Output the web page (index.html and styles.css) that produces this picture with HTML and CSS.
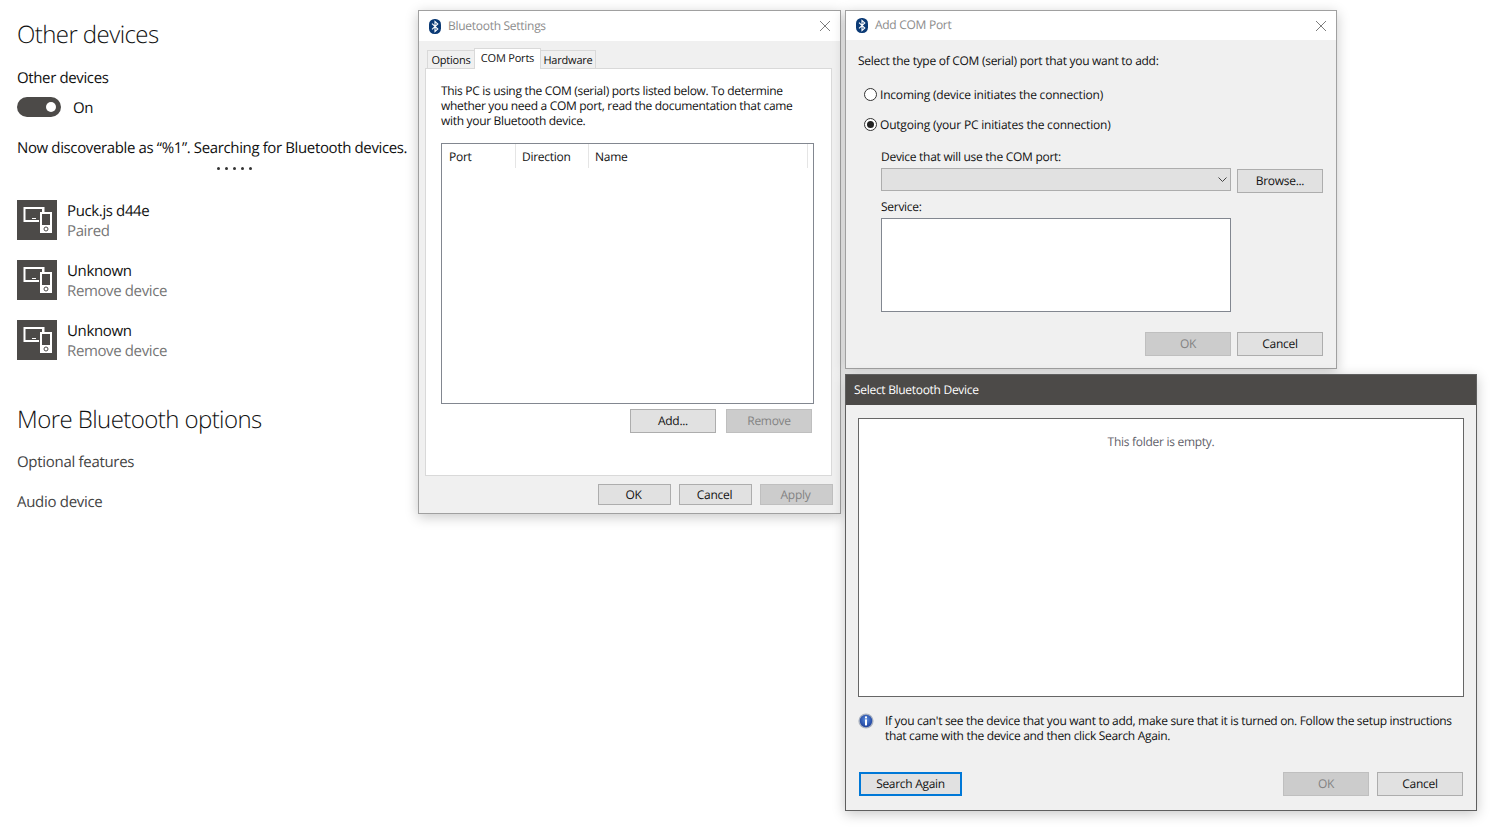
FILE: index.html
```html
<!DOCTYPE html>
<html lang="en">
<head>
<meta charset="utf-8">
<title>Bluetooth</title>
<link rel="stylesheet" href="styles.css">
</head>
<body>
<svg class="defs" width="0" height="0" aria-hidden="true">
  <defs>
    <symbol id="bt" viewBox="0 0 12 15">
      <rect x="0" y="0" width="12" height="15" rx="5.5" fill="#0b3a75"/>
      <path d="M3 4.6 8.8 10 6 12.6V2.4L8.8 5 3 10.4" fill="none" stroke="#fff" stroke-width="1.1"/>
    </symbol>
    <symbol id="close" viewBox="0 0 10 10">
      <path d="M0 0l10 10M10 0L0 10" fill="none" stroke="#7d7d7d" stroke-width="1"/>
    </symbol>
    <symbol id="device" viewBox="0 0 40 40">
      <rect width="40" height="40" fill="#4c4a48"/>
      <path d="M6.5 7H27.5V12H25V9H8.5V20H22V22H6.5Z" fill="#fff"/>
      <rect x="15" y="18" width="4" height="1" fill="#fff"/>
      <rect x="23" y="12" width="12" height="21" fill="#fff"/>
      <rect x="25" y="14" width="8" height="11" fill="#4c4a48"/>
      <circle cx="29" cy="29" r="2" fill="none" stroke="#4c4a48"/>
    </symbol>
  </defs>
</svg>

<main class="settings">
  <h1 class="heading">Other devices</h1>
  <p class="label label-first">Other devices</p>
  <div class="toggle-row">
    <span class="toggle"><span class="knob"></span></span>
    <span class="label toggle-label">On</span>
  </div>
  <p class="label status">Now discoverable as “%1”. Searching for Bluetooth devices.</p>
  <div class="dots"><i></i><i></i><i></i><i></i><i></i></div>
  <ul class="devices">
    <li class="device">
      <svg class="device-icon"><use href="#device"/></svg>
      <div class="device-text"><div class="label">Puck.js d44e</div><div class="label muted">Paired</div></div>
    </li>
    <li class="device">
      <svg class="device-icon"><use href="#device"/></svg>
      <div class="device-text"><div class="label">Unknown</div><div class="label muted">Remove device</div></div>
    </li>
    <li class="device">
      <svg class="device-icon"><use href="#device"/></svg>
      <div class="device-text"><div class="label">Unknown</div><div class="label muted">Remove device</div></div>
    </li>
  </ul>
  <h2 class="heading heading-more">More Bluetooth options</h2>
  <p class="label link link-first">Optional features</p>
  <p class="label link link-second">Audio device</p>
</main>

<section class="win win-settings">
  <header class="titlebar">
    <svg class="bt"><use href="#bt"/></svg>
    <span class="title">Bluetooth Settings</span>
    <svg class="close"><use href="#close"/></svg>
  </header>
  <div class="win-body settings-body">
    <div class="tabs">
      <span class="tab tab-options">Options</span>
      <span class="tab tab-active">COM Ports</span>
      <span class="tab tab-hardware">Hardware</span>
    </div>
    <div class="tab-page">
      <p class="text text-intro">This PC is using the COM (serial) ports listed below. To determine<br>whether you need a COM port, read the documentation that came<br>with your Bluetooth device.</p>
      <div class="port-list">
        <div class="list-head">
          <span class="col col-port">Port</span>
          <span class="col col-dir">Direction</span>
          <span class="col col-name">Name</span>
        </div>
      </div>
      <div class="list-actions">
        <button class="btn btn-wide">Add...</button>
        <button class="btn btn-wide" disabled>Remove</button>
      </div>
    </div>
    <div class="footer-small">
      <button class="btn btn-small">OK</button>
      <button class="btn btn-small">Cancel</button>
      <button class="btn btn-small" disabled>Apply</button>
    </div>
  </div>
</section>

<section class="win win-add">
  <header class="titlebar titlebar-add">
    <svg class="bt"><use href="#bt"/></svg>
    <span class="title">Add COM Port</span>
    <svg class="close"><use href="#close"/></svg>
  </header>
  <div class="win-body add-body">
    <p class="text">Select the type of COM (serial) port that you want to add:</p>
    <div class="radio radio-in"><span class="dot"></span><span class="text radio-text">Incoming (device initiates the connection)</span></div>
    <div class="radio radio-out"><span class="dot dot-on"></span><span class="text radio-text">Outgoing (your PC initiates the connection)</span></div>
    <div class="add-fields">
      <p class="text">Device that will use the COM port:</p>
      <div class="combo-row">
        <div class="combo">
          <svg class="chev" viewBox="0 0 9 5"><path d="M.5.5l4 4 4-4" fill="none" stroke="#444" stroke-width="1"/></svg>
        </div>
        <button class="btn btn-wide btn-browse">Browse...</button>
      </div>
      <p class="text service-label">Service:</p>
      <div class="service-box"></div>
    </div>
    <div class="footer-wide">
      <button class="btn btn-wide" disabled>OK</button>
      <button class="btn btn-wide">Cancel</button>
    </div>
  </div>
</section>

<section class="win win-select">
  <header class="titlebar-dark">Select Bluetooth Device</header>
  <div class="win-body select-body">
    <div class="device-box"><span class="text empty">This folder is empty.</span></div>
    <div class="hint">
      <svg class="info" viewBox="0 0 16 16">
        <defs><radialGradient id="infog" cx="50%" cy="40%" r="60%"><stop offset="0" stop-color="#5b8fe0"/><stop offset="1" stop-color="#1d3f9a"/></radialGradient></defs>
        <circle cx="8" cy="8" r="7.6" fill="#aab2c0"/>
        <circle cx="8" cy="8" r="6.2" fill="url(#infog)"/>
        <rect x="7" y="3.4" width="2" height="2" fill="#fff"/>
        <rect x="7" y="6.4" width="2" height="6" fill="#fff"/>
      </svg>
      <p class="text text-hint">If you can't see the device that you want to add, make sure that it is turned on. Follow the setup instructions<br>that came with the device and then click Search Again.</p>
    </div>
    <div class="select-footer">
      <button class="btn btn-search">Search Again</button>
      <span class="spacer"></span>
      <button class="btn btn-wide" disabled>OK</button>
      <button class="btn btn-wide">Cancel</button>
    </div>
  </div>
</section>
</body>
</html>
```

FILE: styles.css
```css
* { box-sizing: border-box; }
html, body { margin: 0; padding: 0; }
body {
  width: 1499px;
  height: 831px;
  overflow: hidden;
  background: #fff;
  color: #000;
  font-family: "Open Sans", "Noto Sans", sans-serif;
  text-rendering: geometricPrecision;
  position: relative;
}
p, h1, h2, ul { margin: 0; padding: 0; }
.defs { position: absolute; }

/* Settings page */
.settings { padding: 19px 0 0 17px; }
.heading {
  font-size: 24px;
  line-height: 32px;
  font-weight: 300;
  letter-spacing: -0.57px;
  color: #111;
}
.label {
  font-size: 15px;
  line-height: 20px;
  letter-spacing: -0.37px;
  color: #111;
  white-space: nowrap;
}
.label-first { margin-top: 17px; }
.toggle-row {
  display: flex;
  align-items: center;
  gap: 12px;
  margin-top: 9px;
  height: 20px;
}
.toggle {
  width: 44px;
  height: 20px;
  border-radius: 10px;
  background: #4c4a48;
  display: flex;
  align-items: center;
  justify-content: flex-end;
  padding-right: 5px;
}
.toggle-label { margin-top: 1px; }
.knob { width: 10px; height: 10px; border-radius: 50%; background: #fff; }
.status { margin-top: 21px; }
.dots { display: flex; gap: 5px; margin-top: 9px; padding-left: 200px; height: 3px; }
.dots i { width: 3px; height: 3px; border-radius: 50%; background: #333; display: block; }
.devices { list-style: none; margin-top: 30px; display: flex; flex-direction: column; gap: 20px; }
.device { display: flex; gap: 10px; height: 40px; align-items: flex-start; }
.device-icon { width: 40px; height: 40px; display: block; }
.device-text { padding-top: 1px; }
.muted { color: #767676; }
.heading-more { margin-top: 44px; }
.link { color: #444; letter-spacing: -0.3px; }
.link-first { margin-top: 16px; }
.link-second { margin-top: 20px; }

/* Windows */
.win {
  position: absolute;
  display: flex;
  flex-direction: column;
  background: #f0f0f0;
  border: 1px solid #a0a0a0;
  box-shadow: 0 3px 12px rgba(0, 0, 0, .22);
}
.win-settings { left: 418px; top: 10px; width: 423px; height: 504px; }
.win-add { left: 845px; top: 10px; width: 492px; height: 359px; }
.win-select { left: 845px; top: 374px; width: 632px; height: 437px; border-color: #5f5f5f; }

.titlebar {
  height: 30px;
  background: #fff;
  display: flex;
  align-items: center;
  padding: 0 10px;
  flex: none;
}
.titlebar-add { height: 29px; }
.bt { width: 12px; height: 15px; flex: none; margin-right: 7px; }
.title { font-size: 12px; letter-spacing: -0.28px; color: #8c8c8c; flex: 1; margin-top: -2px; }
.close { width: 10px; height: 10px; flex: none; }
.titlebar-dark {
  height: 30px;
  flex: none;
  background: #4c4a48;
  color: #fff;
  font-size: 12px;
  letter-spacing: -0.3px;
  display: flex;
  align-items: center;
  padding: 0 0 2px 8px;
}

.text {
  font-size: 12px;
  line-height: 15px;
  letter-spacing: -0.28px;
  color: #111;
  white-space: nowrap;
}
.text-intro { letter-spacing: -0.31px; }
.text-hint { letter-spacing: -0.315px; }
.radio-text { letter-spacing: -0.2px; }

.btn {
  font-family: inherit;
  text-rendering: geometricPrecision;
  font-size: 12px;
  letter-spacing: -0.3px;
  color: #111;
  background: #e1e1e1;
  border: 1px solid #adadad;
  padding: 0 0 2px;
  border-radius: 0;
  height: 24px;
  flex: none;
}
.btn:disabled { background: #ccc; border-color: #bfbfbf; color: #838383; }
.btn-wide { width: 86px; }
.btn-small { width: 73px; height: 21px; padding: 0 2px 0 0; }

/* Bluetooth Settings */
.settings-body { padding: 7px 8px 0 6px; flex: 1; display: flex; flex-direction: column; }
.tabs { display: flex; align-items: flex-end; height: 20px; padding-left: 2px; position: relative; z-index: 1; }
.tab {
  font-size: 11px;
  letter-spacing: -0.2px;
  height: 18px;
  line-height: 20px;
  background: #f0f0f0;
  border: 1px solid #d9d9d9;
  border-bottom: 0;
  text-align: center;
  color: #111;
}
.tab-options { width: 48px; margin-right: -1px; }
.tab-active { width: 67px; height: 21px; line-height: 20px; background: #fff; margin-bottom: -1px; position: relative; }
.tab-hardware { width: 56px; margin-left: -1px; }
.tab-page {
  height: 408px;
  background: #fff;
  border: 1px solid #d9d9d9;
  padding: 14px 0 0 15px;
}
.port-list { width: 373px; height: 261px; margin-top: 15px; border: 1px solid #828790; }
.list-head { display: flex; height: 24px; }
.col { font-size: 12px; letter-spacing: -0.28px; line-height: 26px; padding-left: 7px; color: #111; border-right: 1px solid #e5e5e5; }
.col-port { width: 74px; }
.col-dir { width: 73px; padding-left: 6px; }
.col-name { width: 219px; padding-left: 6px; }
.list-actions { display: flex; justify-content: flex-end; gap: 10px; width: 371px; margin-top: 5px; }
.footer-small { display: flex; gap: 8px; justify-content: flex-end; margin: 8px -1px 0 0; }

/* Add COM Port */
.add-body { padding: 13px 13px 0 12px; flex: 1; }
.radio { display: flex; align-items: center; gap: 3px; padding-left: 6px; height: 15px; }
.radio-in { margin-top: 19px; }
.radio-out { margin-top: 15px; }
.dot { width: 13px; height: 13px; border: 1px solid #333; border-radius: 50%; background: #fff; flex: none; position: relative; display: flex; align-items: center; justify-content: center; }
.dot-on::after { content: ""; width: 7px; height: 7px; border-radius: 50%; background: #222; }
.add-fields { padding-left: 23px; margin-top: 17px; }
.combo-row { display: flex; gap: 6px; align-items: flex-start; margin-top: 4px; }
.combo { width: 350px; height: 23px; background: #e1e1e1; border: 1px solid #adadad; display: flex; align-items: center; justify-content: flex-end; padding-right: 3px; }
.chev { width: 9px; height: 5px; }
.btn-browse { margin-top: 1px; }
.service-label { margin-top: 6px; }
.service-box { width: 350px; height: 94px; background: #fff; border: 1px solid #828790; margin-top: 4px; }
.footer-wide { display: flex; justify-content: flex-end; gap: 6px; margin-top: 20px; }

/* Select Bluetooth Device */
.select-body { padding: 13px 12px 0 12px; flex: 1; }
.device-box { height: 279px; width: 606px; background: #fff; border: 1px solid #666; display: flex; justify-content: center; padding-top: 15px; }
.empty { color: #5f5f6a; height: 15px; }
.hint { display: flex; margin-top: 16px; align-items: flex-start; gap: 11px; }
.info { width: 16px; height: 16px; flex: none; }
.select-footer { display: flex; align-items: center; gap: 8px; margin-top: 29px; padding: 0 1px; }
.spacer { flex: 1; }
.btn-search { width: 103px; border: 2px solid #0078d7; }
```
